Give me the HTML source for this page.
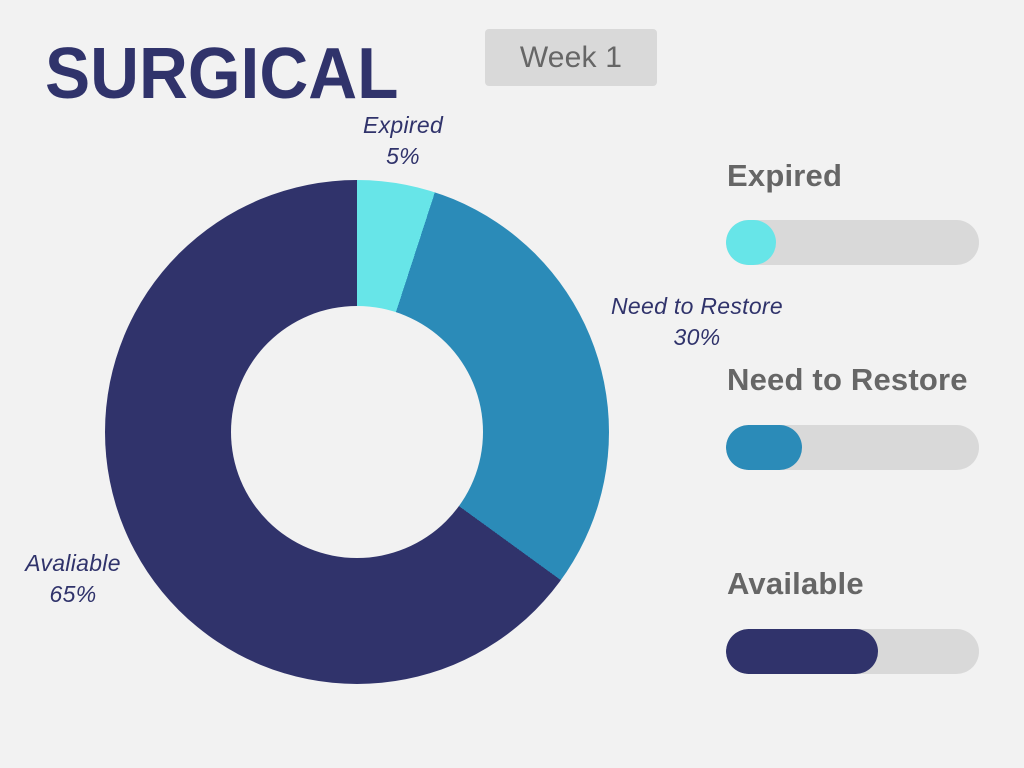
<!DOCTYPE html>
<html><head><meta charset="utf-8"><style>
body{margin:0;width:1024px;height:768px;background:#f2f2f2;position:relative;overflow:hidden;font-family:"Liberation Sans",sans-serif}
.a{position:absolute}
.title{left:45px;top:38px;font-size:72px;font-weight:bold;color:#30336b;transform:scaleX(0.94);transform-origin:left top;line-height:72px}
.week{left:485px;top:29px;width:172px;height:57px;background:#d9d9d9;border-radius:4px;color:#666;font-size:30px;text-align:center;line-height:57px;letter-spacing:0.2px}
.donut{left:105px;top:180px;width:504px;height:504px;border-radius:50%;background:conic-gradient(#67e5e8 0 18deg,#2b8bb8 18deg 126deg,#30336b 126deg 360deg)}
.hole{left:231px;top:306px;width:252px;height:252px;border-radius:50%;background:#f2f2f2}
.lbl{font-style:italic;color:#30336b;font-size:23px;text-align:center;line-height:31px;width:260px;letter-spacing:0.3px}
.h{left:727px;font-size:31px;font-weight:bold;color:#666;line-height:34px;letter-spacing:0.2px}
.bar{left:726px;width:253px;height:45px;border-radius:23px;background:#d9d9d9;overflow:hidden}
.bar div{height:100%;border-radius:23px}
</style></head><body>
<div class="a title">SURGICAL</div>
<div class="a week">Week 1</div>
<div class="a donut"></div>
<div class="a hole"></div>
<div class="a lbl" style="left:273px;top:110px">Expired<br>5%</div>
<div class="a lbl" style="left:567px;top:291px">Need to Restore<br>30%</div>
<div class="a lbl" style="left:-57px;top:548px">Avaliable<br>65%</div>
<div class="a h" style="top:159px">Expired</div>
<div class="a bar" style="top:220px"><div style="width:50px;background:#67e5e8"></div></div>
<div class="a h" style="top:363px">Need to Restore</div>
<div class="a bar" style="top:425px"><div style="width:76px;background:#2b8bb8"></div></div>
<div class="a h" style="top:567px">Available</div>
<div class="a bar" style="top:629px"><div style="width:152px;background:#30336b"></div></div>
</body></html>
